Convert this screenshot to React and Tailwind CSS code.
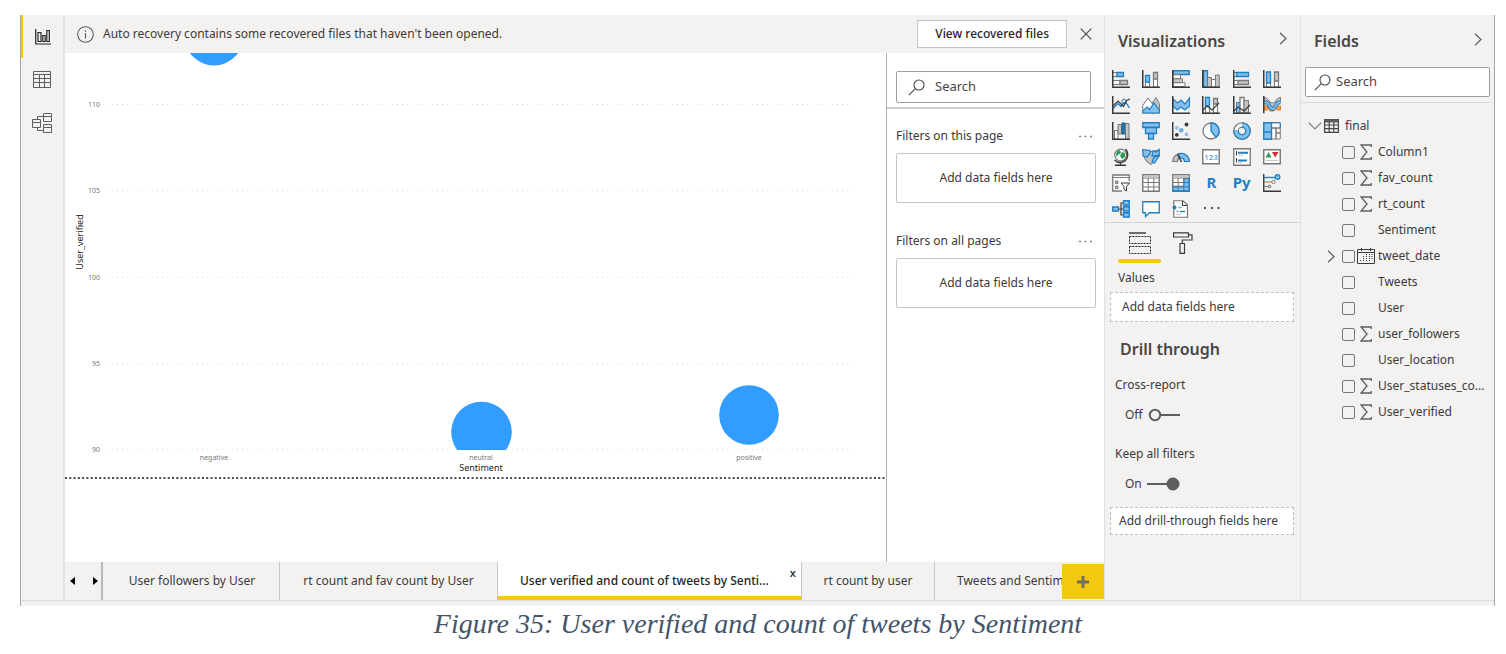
import React from "react";

const DARK = "#3b3a39";
const GREY = "#7a7876";
const LIGHT = "#c8c6c4";
const BLUE = "#1f7fc1";
const SKY = "#84bfee";

function Icon({ size = 18, children, className = "" }) {
  return (
    <svg width={size} height={size} viewBox="0 0 18 18" fill="none" className={className} aria-hidden="true">
      {children}
    </svg>
  );
}

const Axes = () => <path d="M.75 0V17.25H18" stroke={DARK} strokeWidth="1.5" />;

const VISUALS = [
  ["Stacked bar chart", <>
    <path d="M1 2.5H5V6.5H1M1 10.5H8V14.5H1" fill="#fff" stroke={GREY} />
    <path d="M5 2.5H11.5V6.5H5Z" fill={SKY} stroke={BLUE} strokeWidth="1.3" />
    <path d="M8 10.5H15.5V14.5H8Z" fill={LIGHT} stroke={GREY} strokeWidth="1.3" />
    <Axes />
  </>],
  ["Stacked column chart", <>
    <path d="M3.5 12V17H7.5V12M11.5 9V17H15.5V9" fill="#fff" stroke={GREY} />
    <path d="M3.5 5.5H7.5V12H3.5Z" fill={SKY} stroke={BLUE} strokeWidth="1.3" />
    <path d="M11.5 2.5H15.5V9H11.5Z" fill={LIGHT} stroke={GREY} strokeWidth="1.3" />
    <Axes />
  </>],
  ["Clustered bar chart", <>
    <path d="M1 .75H17.25V4.5H1Z" fill={SKY} stroke={BLUE} strokeWidth="1.3" />
    <path d="M1 4.75H8.5V8.5H1Z" fill="#fff" stroke={GREY} />
    <path d="M1 8.75H10.5V12.5H1Z" fill={LIGHT} stroke={GREY} />
    <path d="M1 12.75H13V16.5H1Z" fill="#fff" stroke={GREY} />
    <Axes />
  </>],
  ["Clustered column chart", <>
    <path d="M1.5 .75H5.5V17H1.5Z" fill={SKY} stroke={BLUE} strokeWidth="1.3" />
    <path d="M5.5 7.5H9.5V17H5.5Z" fill={LIGHT} stroke={GREY} />
    <path d="M9.5 9.5H13.5V17H9.5Z" fill="#fff" stroke={GREY} />
    <path d="M13.5 5H17.25V17H13.5Z" fill={LIGHT} stroke={GREY} />
    <Axes />
  </>],
  ["100% stacked bar chart", <>
    <path d="M1 2.5H6V6.5H1M1 10.5H6V14.5H1" fill="#fff" stroke={GREY} />
    <path d="M3.5 2.5H15.5V6.5H3.5Z" fill={SKY} stroke={BLUE} strokeWidth="1.3" />
    <path d="M5 10.5H15.5V14.5H5Z" fill={LIGHT} stroke={GREY} strokeWidth="1.3" />
    <Axes />
  </>],
  ["100% stacked column chart", <>
    <path d="M3.5 13V17H7.5V13M11.5 11V17H15.5V11" fill="#fff" stroke={GREY} />
    <path d="M3.5 2H7.5V13H3.5Z" fill={SKY} stroke={BLUE} strokeWidth="1.3" />
    <path d="M11.5 2H15.5V11H11.5Z" fill={LIGHT} stroke={GREY} strokeWidth="1.3" />
    <Axes />
  </>],
  ["Line chart", <>
    <path d="M1 12.5L6 7.5L9 10.5L11.5 7L14 7L17.5 12" stroke={BLUE} strokeWidth="1.3" />
    <circle cx="12" cy="5.5" r="2.2" stroke={BLUE} />
    <path d="M1 10L6 5L11.5 10.5L14.5 4.5L18 3" stroke={DARK} strokeWidth="1.2" />
    <Axes />
  </>],
  ["Area chart", <>
    <path d="M9 9L14 1.5L17.5 8V17H10Z" fill={LIGHT} stroke={GREY} />
    <path d="M.75 17V9.5L6 2L12 10V17Z" fill="#fff" stroke={GREY} />
    <path d="M.75 17V15L5 11L7.5 13.5L12 7L17.25 14V17Z" fill={SKY} stroke={BLUE} strokeWidth="1.2" />
  </>],
  ["Stacked area chart", <>
    <path d="M1 12L5.5 14L9 11L13 14L17 9V17H1Z" fill="#fff" stroke={LIGHT} />
    <path d="M1 3L5.5 7L9 4L13 8L17.5 2V10L13 14L9 11L5.5 14L1 10Z" fill={SKY} stroke={BLUE} strokeWidth="1.2" />
    <Axes />
  </>],
  ["Line and stacked column chart", <>
    <path d="M3.5 9V17H7.5V9M11.5 9V17H15.5V9" fill="#fff" stroke={GREY} />
    <path d="M3.5 1.5H7.5V10H3.5Z" fill={SKY} stroke={BLUE} strokeWidth="1.3" />
    <path d="M11.5 2.5H15.5V8H11.5Z" fill={LIGHT} stroke={GREY} strokeWidth="1.3" />
    <path d="M1 14L5 10L10 14L17 7" stroke={DARK} strokeWidth="1.2" />
    <Axes />
  </>],
  ["Line and clustered column chart", <>
    <path d="M3.5 6.5H7V17H3.5Z" fill={SKY} stroke={BLUE} />
    <path d="M7 1.5H11V17H7Z" fill="#fff" stroke={GREY} strokeWidth="1.3" />
    <path d="M11 4.5H15.5V17H11Z" fill={LIGHT} stroke={GREY} />
    <path d="M1 15L5 11L11 15L17 9" stroke={DARK} strokeWidth="1.2" />
    <Axes />
  </>],
  ["Ribbon chart", <>
    <path d="M1 10H4L7 15H11L14 10H17.5V14H14L12 11H6L4 14H1Z" fill="#f2a35c" stroke="#e07b1c" />
    <path d="M1 1.5C5 1.5 6 7 9.5 7S13 1.5 17.5 1.5V6C14 6 13 11 9.5 11S5 6 1 6Z" fill={LIGHT} stroke={GREY} />
    <path d="M1 6.5H4C6 7 6.5 13 9.5 13S13 7 15 6.5H17.5" stroke={BLUE} strokeWidth="3.8" />
    <path d="M1 6.5H4C6 7 6.5 13 9.5 13S13 7 15 6.5H17.5" stroke={SKY} strokeWidth="1.8" />
    <path d="M.75 0V17.25" stroke={DARK} strokeWidth="1.5" />
  </>],
  ["Waterfall chart", <>
    <path d="M2.5 8.5H6V17H2.5Z" fill="#fff" stroke={GREY} />
    <path d="M6 2.5H9.5V12H6Z" fill={LIGHT} stroke={GREY} />
    <path d="M10 1H13V12H10Z" fill={BLUE} stroke="#155d91" />
    <path d="M13.5 1.5H17V17H13.5Z" fill={LIGHT} stroke={GREY} />
    <Axes />
  </>],
  ["Funnel", <g fill={SKY} stroke={BLUE} strokeWidth="1.3">
    <path d="M.75 .75H17.25V5.5H.75Z" /><path d="M3.5 5.5H14.5V11.5H3.5Z" /><path d="M6.5 11.5H11.5V17H6.5Z" />
  </g>],
  ["Scatter chart", <>
    <circle cx="14.5" cy="2.5" r="1.9" fill={DARK} /><circle cx="4.8" cy="5.8" r="1.9" fill={SKY} />
    <circle cx="9.3" cy="8.3" r="1.7" fill={SKY} stroke={BLUE} strokeWidth=".8" /><circle cx="4.8" cy="12.8" r="1.9" fill={DARK} />
    <circle cx="14.5" cy="12.3" r="1.9" fill={SKY} />
    <Axes />
  </>],
  ["Pie chart", <>
    <circle cx="9" cy="9" r="8" fill="#fff" stroke={GREY} strokeWidth="1.3" />
    <path d="M9 1A8 8 0 0 1 14 15.3L9 9Z" fill={SKY} stroke={BLUE} strokeWidth="1.3" />
  </>],
  ["Donut chart", <>
    <circle cx="9" cy="9" r="6" stroke={GREY} strokeWidth="5.6" />
    <circle cx="9" cy="9" r="6" stroke="#fff" strokeWidth="3.2" />
    <path d="M9 3A6 6 0 1 1 3 8.5" stroke={BLUE} strokeWidth="5.6" />
    <path d="M9 3A6 6 0 1 1 3 9" stroke={SKY} strokeWidth="3.2" />
  </>],
  ["Treemap", <>
    <path d="M8.5 .75H17.25V6H8.5ZM8.5 6H13V17H8.5ZM13 6H17.25V11H13ZM13 11H17.25V17H13Z" fill="#fff" stroke={GREY} />
    <path d="M.75 .75H8.5V10H.75ZM.75 10H8.5V17.25H.75Z" fill={SKY} stroke={BLUE} strokeWidth="1.4" />
    <path d="M8.5 .75H17.25V6" stroke={BLUE} />
  </>],
  ["Map", <>
    <circle cx="8.6" cy="7" r="5.9" fill="#fff" stroke={GREY} strokeWidth="1.2" />
    <path d="M4.5 3.5L8 2L9 5L6 7L4 9ZM10 4L13 5L13 9L10 11L8 8Z" fill="#2b9b57" />
    <path d="M13.5 1C17 5 16 11 12 13.3C8 15.5 4.5 14 2.5 12M8.5 14.5V17M3 17.2H14" stroke={DARK} strokeWidth="1.4" />
  </>],
  ["Filled map", <>
    <path d="M1 2L7 4L16.5 2L17 9L12 14L9 16.5L5 14L2.5 10Z" fill={LIGHT} stroke={GREY} />
    <path d="M.75 1.5L8 2.5V6L5 9L1 8ZM11 3L14 4L17.3 1.5V7L10 8ZM12 9L17 8L12.5 15L10 14Z" fill={SKY} stroke={BLUE} strokeWidth="1.2" />
  </>],
  ["Gauge", <>
    <path d="M.75 13.5A8.25 8.25 0 0 1 17.25 13.5H12.5A3.5 3.5 0 0 0 5.5 13.5Z" fill={LIGHT} stroke={GREY} strokeWidth="1.2" />
    <path d="M6 6A8.25 8.25 0 0 1 17.25 13.5H12.5A3.5 3.5 0 0 0 9 10Z" fill={SKY} stroke={BLUE} strokeWidth="1.2" />
    <path d="M9.5 14L5.5 6.5" stroke={DARK} strokeWidth="1.5" />
  </>],
  ["Card", <>
    <path d="M.75 1.75H17.25V15.75H.75Z" fill="#fff" stroke={GREY} strokeWidth="1.4" />
    <text x="9" y="12" textAnchor="middle" fontSize="8" fill={BLUE} className="font-['Open_Sans',sans-serif]">123</text>
  </>],
  ["Multi-row card", <>
    <path d="M.75 .75H17.25V17.25H.75Z" fill="#fff" stroke={GREY} strokeWidth="1.3" />
    <path d="M3.5 3V7.5M3.5 10V14.5" stroke={DARK} />
    <path d="M5 4.8H15M5 12.5H14" stroke={BLUE} strokeWidth="1.9" /><path d="M5 7.2H10M5 14.7H9" stroke={LIGHT} />
  </>],
  ["KPI", <>
    <path d="M.75 1.75H17.25V15.75H.75Z" fill="#fff" stroke={GREY} strokeWidth="1.4" />
    <path d="M2.5 9.5L5.5 4L8.5 9.5Z" fill="#2b9b57" /><path d="M9 4H15.5L12.2 9.5Z" fill="#d32f2f" />
    <path d="M3 12.5H15" stroke={LIGHT} />
  </>],
  ["Slicer", <>
    <path d="M17.25 7V1H.75V17H10" fill="#fff" stroke={GREY} strokeWidth="1.3" /><path d="M.75 3.5H17" stroke={GREY} />
    <path d="M3.5 7H6V9.5H3.5ZM3.5 12H6V14.5H3.5Z" fill={LIGHT} stroke={GREY} />
    <path d="M9 9H17.5L14.5 12.5V17L12 15.5V12.5Z" fill="#fff" stroke={DARK} />
  </>],
  ["Table", <>
    <path d="M.75 .75H17.25V17.25H.75Z" fill="#fff" stroke={GREY} strokeWidth="1.4" />
    <path d="M1 4H17M1 8.5H17M1 13H17M6.2 4V17M11.8 4V17" stroke={GREY} /><path d="M1 2.5H17" stroke={LIGHT} strokeWidth="2" />
  </>],
  ["Matrix", <>
    <path d="M.75 .75H17.25V17.25H.75Z" fill="#fff" stroke={GREY} strokeWidth="1.4" />
    <path d="M11.8 4.5H17V17H1V12.5H11.8Z" fill={SKY} stroke={BLUE} strokeWidth="1.3" />
    <path d="M1 4H17M1 8.5H12M1 13H12M6.2 4V13M11.8 4V13" stroke={GREY} />
    <path d="M11.8 8.5H17M11.8 13H17M6.2 13V17M11.8 13V17" stroke={BLUE} /><path d="M1 2.5H17" stroke={LIGHT} strokeWidth="2" />
  </>],
  ["R script visual", "R"],
  ["Python visual", "Py"],
  ["Key influencers", <>
    <path d="M.75 0V17.25H18" stroke={DARK} strokeWidth="1.4" />
    <path d="M1 3.5H13" stroke={BLUE} strokeWidth="1.4" /><circle cx="14.5" cy="3" r="2.4" fill={SKY} stroke={BLUE} strokeWidth="1.2" />
    <path d="M1 8H9M1 12.5H5" stroke={GREY} strokeWidth="1.2" /><circle cx="10.5" cy="8" r="1.7" fill="#fff" stroke={GREY} /><circle cx="6.5" cy="12.5" r="1.4" fill={LIGHT} stroke={GREY} />
  </>],
  ["Decomposition tree", <>
    <path d="M6 9H12M9 9V3H12M9 9V15H12" stroke={DARK} strokeWidth="1.2" />
    <path d="M.75 7H6.5V11H.75ZM11.5 .75H17.25V5H11.5ZM11.5 6.8H17.25V11H11.5ZM11.5 12.8H17.25V17H11.5Z" fill={SKY} stroke={BLUE} strokeWidth="1.4" />
  </>],
  ["Q&A", <path d="M.75 1.75H17.25V12.75H7.5L3.5 16.5V12.75H.75Z" fill="#fff" stroke={BLUE} strokeWidth="1.3" />],
  ["Paginated report", <>
    <path d="M1.75 .75H11L15.5 5V17.25H1.75Z" fill="#fff" stroke={GREY} strokeWidth="1.2" /><path d="M10.5 1V5.5H15" stroke={DARK} />
    <circle cx="2.5" cy="7.5" r="2" fill={BLUE} /><path d="M6 7.5H10M4 11.5H7" stroke={SKY} strokeWidth="1.4" /><path d="M8 11.5H13" stroke={BLUE} strokeWidth="1.4" /><path d="M4 14.5H9" stroke={LIGHT} />
  </>],
  ["More visuals", <path d="M2 8H4M9 8H11M15.5 8H17.5" stroke="#52505a" strokeWidth="1.8" />],
];

function VisualIcon({ art }) {
  if (typeof art === "string") {
    return <span className="block h-[18px] min-w-[18px] text-center text-[15px] leading-4 font-bold text-[#1f7fc1]">{art}</span>;
  }
  return <Icon>{art}</Icon>;
}

const ReportIcon = () => (
  <svg width="16" height="16" viewBox="0 0 16 16" fill="none" stroke="#252423" strokeWidth="1.2" aria-hidden="true">
    <path d="M.7 0V15H16" /><path d="M3 3.5H6V12.5H3ZM7.8 6.5H10.2V12.5H7.8ZM11.8 1.5H14.3V12.5H11.8Z" />
  </svg>
);

const GridIcon = () => (
  <svg width="18" height="17" viewBox="0 0 18 17" fill="none" stroke="#605e5c" aria-hidden="true">
    <path d="M.5 .5H17.5V16.5H.5ZM.5 3.5H17.5M.5 7.5H17.5M.5 11.5H17.5M6.5 3.5V16.5M11.5 3.5V16.5" />
  </svg>
);

const ModelIcon = () => (
  <svg width="20" height="20" viewBox="0 0 20 20" fill="none" stroke="#605e5c" aria-hidden="true">
    <path d="M.5 6.5H8.5V14.5H.5ZM.5 9.5H8.5M11.5 .5H19.5V8.5H11.5ZM11.5 3.5H19.5M11.5 11.5H19.5V19.5H11.5ZM11.5 14.5H19.5M5.5 6V3.5H11.5M5.5 15V17.5H11.5" />
  </svg>
);

const Chevron = () => (
  <svg width="8" height="13" viewBox="0 0 8 13" fill="none" stroke="#605e5c" strokeWidth="1.2" aria-hidden="true">
    <path d="M1 .7L7 6.5L1 12.3" />
  </svg>
);

const SearchIcon = () => (
  <svg width="17" height="17" viewBox="0 0 17 17" fill="none" stroke="#484644" strokeWidth="1.1" aria-hidden="true">
    <circle cx="11" cy="6" r="5" /><path d="M7.3 9.7L.8 16.2" />
  </svg>
);

const Sigma = () => (
  <svg width="12" height="16" viewBox="0 0 12 16" fill="none" stroke="#605e5c" strokeWidth="1.3" aria-hidden="true">
    <path d="M11.3 3V1H1L7 8L1 15H11.3V13" />
  </svg>
);

const CalendarIcon = () => (
  <svg width="18" height="16" viewBox="0 0 18 16" fill="none" stroke="#3b3a39" aria-hidden="true">
    <path d="M.5 1.5H17.5V15.5H.5ZM.5 4.5H17.5M4.5 0V3M13.5 0V3" /><path d="M3.5 12V14M6.5 8V14M9.5 6V14M12.5 6V14M15 6V12" strokeDasharray="1 1" />
  </svg>
);

const TableIcon = () => (
  <svg width="15" height="14" viewBox="0 0 15 14" fill="none" stroke="#484644" strokeWidth="1.2" aria-hidden="true">
    <path d="M.6 .6H14.4V13.4H.6ZM.6 6H14.4M.6 9.7H14.4M5.2 3V13.4M9.8 3V13.4" /><path d="M.6 2H14.4" strokeWidth="3" stroke="#605e5c" />
  </svg>
);

function Chart() {
  const rows = [[110, 52], [105, 138], [100, 225], [95, 311], [90, 397]];
  return (
    <svg viewBox="0 0 821 428" className="block w-full font-['Noto_Sans',sans-serif]" role="img" aria-label="User_verified by Sentiment">
      <defs><clipPath id="plot"><rect x="41" y="0" width="750" height="397" /></clipPath></defs>
      {rows.map(([label, y]) => (
        <g key={label}>
          <path d={`M42 ${y - 0.5}H791`} stroke="#dedede" strokeDasharray="1 4" />
          <text x="35" y={y + 2} textAnchor="end" fontSize="7" fill="#777">{label}</text>
        </g>
      ))}
      <g clipPath="url(#plot)" fill="#329dff">
        <circle cx="149" cy="-17" r="29.5" /><circle cx="416.5" cy="379" r="30.3" /><circle cx="684" cy="362" r="29.8" />
      </g>
      <g textAnchor="middle" fontSize="7" fill="#777">
        <text x="149" y="407">negative</text><text x="416" y="407">neutral</text><text x="684" y="407">positive</text>
      </g>
      <text x="416" y="418" textAnchor="middle" fontSize="9" fill="#252423">Sentiment</text>
      <text transform="translate(18 189) rotate(-90)" textAnchor="middle" fontSize="9" fill="#252423">User_verified</text>
      <path d="M0 425H820" stroke="#4a4a4a" strokeWidth="2" strokeDasharray="2 2.28" />
    </svg>
  );
}

function Search({ id, className, gap }) {
  return (
    <div className={`flex items-center rounded-xs border border-[#a19f9d] bg-white ${className}`}>
      <label htmlFor={id} className="shrink-0"><SearchIcon /></label>
      <input id={id} type="text" aria-label="Search" placeholder="Search" className={`min-w-0 flex-1 bg-transparent text-[13px] text-[#484644] outline-none placeholder:text-[#484644] ${gap}`} />
    </div>
  );
}

function FilterGroup({ title }) {
  return (
    <section>
      <div className="flex h-5 items-center justify-between pr-1">
        <h3>{title}</h3>
        <button type="button" aria-label="More options">
          <svg width="13" height="3" viewBox="0 0 13 3" aria-hidden="true"><path d="M0 1.5H2M5.5 1.5H7.5M11 1.5H13" stroke="#8a8886" strokeWidth="1.3" /></svg>
        </button>
      </div>
      <div className="mt-[7px] flex h-[50px] items-center justify-center rounded-xs border border-[#c8c6c4]">Add data fields here</div>
    </section>
  );
}

const FIELDS = [
  ["Column1", "sum"], ["fav_count", "sum"], ["rt_count", "sum"], ["Sentiment", ""], ["tweet_date", "date"], ["Tweets", ""],
  ["User", ""], ["user_followers", "sum"], ["User_location", ""], ["User_statuses_co...", "sum"], ["User_verified", "sum"],
];

function Switch({ label, name, on }) {
  return (
    <label className="flex h-5 items-center pl-[15px]">
      {label}
      <input type="checkbox" role="switch" aria-label={name} defaultChecked={on} className="sr-only" />
      <svg width="33" height="14" viewBox="0 0 33 14" fill="none" stroke="#605e5c" strokeWidth="2" className="ml-[5px]" aria-hidden="true">
        {on ? <><path d="M0 7H20" /><circle cx="26" cy="7" r="5.5" fill="#605e5c" /></> : <><circle cx="7" cy="7" r="5.2" /><path d="M13 7H32" /></>}
      </svg>
    </label>
  );
}

export default function App() {
  return (
    <div className="flex min-h-screen flex-col bg-white pt-[15px] font-['Noto_Sans',sans-serif] text-xs text-[#3b3a39]">
      <div className="mr-[11px] ml-5 flex flex-1 flex-col border-x border-[#a8a6a4] bg-[#f3f2f1]">
        <div className="flex flex-1 border-b border-[#dddbd9]">
          <nav aria-label="Views" className="flex w-11 shrink-0 flex-col border-r-2 border-[#e6e4e2]">
            <button type="button" aria-label="Report" className="flex h-[43px] items-center justify-center border-l-2 border-[#f2c811]"><ReportIcon /></button>
            <button type="button" aria-label="Data" className="flex h-[43px] items-center justify-center"><GridIcon /></button>
            <button type="button" aria-label="Model" className="flex h-[43px] items-center justify-center"><ModelIcon /></button>
          </nav>

          <main className="flex min-w-0 flex-1 flex-col">
            <div className="flex h-[38px] items-center px-3">
              <svg width="17" height="17" viewBox="0 0 17 17" fill="none" stroke="#605e5c" aria-hidden="true"><circle cx="8.5" cy="8.5" r="7.8" strokeWidth="1.1" /><path d="M8.5 7V12.5M8.5 4.3V5.7" strokeWidth="1.2" /></svg>
              <p className="ml-[9px] flex-1">Auto recovery contains some recovered files that haven't been opened.</p>
              <button type="button" className="h-7 border border-[#c8c6c4] bg-white px-[17px] font-medium text-[#252423]">View recovered files</button>
              <button type="button" aria-label="Close" className="ml-[13px]">
                <svg width="12" height="12" viewBox="0 0 12 12" stroke="#484644" strokeWidth="1.1" aria-hidden="true"><path d="M.7 .7L11.3 11.3M11.3 .7L.7 11.3" /></svg>
              </button>
            </div>
            <div className="flex flex-1 bg-white">
              <div className="min-w-0 flex-1"><Chart /></div>
              <aside aria-label="Filters" className="w-[218px] shrink-0 border-l border-[#b3b0ad]">
                <div className="border-b-2 border-[#cfcdcb] pt-[18px] pr-[13px] pb-1 pl-[9px]">
                  <Search id="filter-search" className="h-8 pl-[11px]" gap="pl-[10px]" />
                </div>
                <div className="flex flex-col gap-7 pt-[17px] pr-2 pl-[9px]">
                  <FilterGroup title="Filters on this page" />
                  <FilterGroup title="Filters on all pages" />
                </div>
              </aside>
            </div>
            <div className="flex h-[38px] min-w-0">
              <div className="flex w-[38px] shrink-0 items-center justify-between border-r-2 border-[#bab8b6] pr-[3px] pl-[5px]">
                <button type="button" aria-label="Previous page"><svg width="5" height="8" viewBox="0 0 5 8" aria-hidden="true"><path d="M5 0V8L0 4Z" /></svg></button>
                <button type="button" aria-label="Next page"><svg width="5" height="8" viewBox="0 0 5 8" aria-hidden="true"><path d="M0 0V8L5 4Z" /></svg></button>
              </div>
              <div className="flex min-w-0 flex-1 overflow-hidden whitespace-nowrap">
                <button type="button" className="w-[177px] shrink-0 border-r border-[#c8c6c4] pl-[2px] text-center">User followers by User</button>
                <button type="button" className="w-[218px] shrink-0 border-r border-[#c8c6c4] text-center">rt count and fav count by User</button>
                <div className="relative flex w-[304px] shrink-0 border-r border-b-4 border-r-[#c8c6c4] border-b-[#f2c811] bg-white">
                  <button type="button" className="flex-1 pt-1 pl-[22px] text-left font-medium text-[#252423]">User verified and count of tweets by Senti...</button>
                  <button type="button" aria-label="Delete page" className="absolute top-1 right-[5px] text-[11px] leading-[14px] font-semibold">x</button>
                </div>
                <button type="button" className="w-[133px] shrink-0 border-r border-[#c8c6c4] text-center">rt count by user</button>
                <button type="button" className="shrink-0 pl-[22px] text-left">Tweets and Sentim</button>
              </div>
              <button type="button" aria-label="New page" className="mt-[2px] mb-px flex w-[42px] shrink-0 items-center justify-center bg-[#f2c811]">
                <svg width="12" height="12" viewBox="0 0 12 12" stroke="#74705f" strokeWidth="3" aria-hidden="true"><path d="M6 0V12M0 6H12" /></svg>
              </button>
            </div>
          </main>

          <aside aria-label="Visualizations" className="w-[197px] shrink-0 border-x border-[#e1dfdd]">
            <div className="flex h-[55px] items-center justify-between px-[13px]">
              <h2 className="pb-1 text-base font-semibold text-[#484644]">Visualizations</h2>
              <button type="button" aria-label="Collapse Visualizations" className="pb-2"><Chevron /></button>
            </div>
            <div className="grid grid-cols-6 gap-y-2 border-b border-[#d6d4d2] pr-[7px] pb-1 pl-[7px]">
              {VISUALS.map(([name, art]) => (
                <button key={name} type="button" aria-label={name} title={name} className="flex h-[18px] justify-start"><VisualIcon art={art} /></button>
              ))}
            </div>
            <div className="flex pl-[13px]">
              <button type="button" aria-label="Fields" className="flex h-9 w-[43px] items-center justify-center pt-1">
                <svg width="22" height="22" viewBox="0 0 22 22" fill="none" stroke="#252423" aria-hidden="true"><path d="M0 1H17" strokeWidth="1.3" /><path d="M.5 4.5H21.5V11.5H.5ZM.5 14.5H21.5V21.5H.5Z" strokeDasharray="2 1" /></svg>
              </button>
              <button type="button" aria-label="Format" className="flex h-9 w-[43px] items-center justify-center pt-1">
                <svg width="20" height="22" viewBox="0 0 20 22" fill="none" stroke="#3b3a39" strokeWidth="1.2" aria-hidden="true"><path d="M.6 .8H15.5V5H.6ZM15.5 2.8H19V8H9.3V11.5M7 11.5H11.5V21.3H7Z" /></svg>
              </button>
            </div>
            <div className="ml-[13px] h-1 w-[43px] rounded-full bg-[#f2c811]" />
            <div className="pr-[6px] pl-[5px]">
              <p className="mt-[5px] pl-2 leading-5">Values</p>
              <div className="mt-1 flex h-[30px] items-center border border-dashed border-[#c0bebc] bg-white pl-[11px]">Add data fields here</div>
              <h2 className="mt-[15px] pl-[10px] text-base leading-6 font-semibold text-[#484644]">Drill through</h2>
              <p className="mt-[14px] pl-[5px] leading-5">Cross-report</p>
              <div className="mt-[10px]"><Switch label="Off" name="Cross-report" on={false} /></div>
              <p className="mt-[19px] pl-[5px] leading-5">Keep all filters</p>
              <div className="mt-[10px]"><Switch label="On" name="Keep all filters" on /></div>
              <div className="mt-[13px] flex h-7 items-center border border-dashed border-[#c0bebc] bg-white pl-2 whitespace-nowrap">Add drill-through fields here</div>
            </div>
          </aside>

          <aside aria-label="Fields" className="w-[193px] shrink-0">
            <div className="flex h-[52px] items-center justify-between pr-3 pl-[13px]">
              <h2 className="text-base font-semibold text-[#484644]">Fields</h2>
              <button type="button" aria-label="Collapse Fields" className="pb-1"><Chevron /></button>
            </div>
            <div className="border-b border-[#dddbd9] pr-1 pb-[5px] pl-1">
              <Search id="field-search" className="h-[30px] pl-2" gap="pl-[5px]" />
            </div>
            <div className="pt-[10px]">
              <button type="button" className="flex h-[26px] items-center pl-[7px]">
                <svg width="14" height="8" viewBox="0 0 14 8" fill="none" stroke="#797775" strokeWidth="1.1" aria-hidden="true"><path d="M.7 .7L7 7L13.3 .7" /></svg>
                <span className="ml-[2px]"><TableIcon /></span>
                <span className="ml-[6px]">final</span>
              </button>
              <ul>
                {FIELDS.map(([name, kind]) => (
                  <li key={name} className="flex h-[26px] items-center pl-[26px]">
                    <span className="flex w-[15px] shrink-0">{kind === "date" && <Chevron />}</span>
                    <label className="flex items-center">
                      <input type="checkbox" className="size-[13px] shrink-0 appearance-none rounded-xs border border-[#797775]" />
                      <span className="flex w-[23px] shrink-0 justify-start">
                        {kind === "sum" && <span className="ml-[5px]"><Sigma /></span>}
                        {kind === "date" && <span className="ml-[2px]"><CalendarIcon /></span>}
                      </span>
                      <span className="whitespace-nowrap">{name}</span>
                    </label>
                  </li>
                ))}
              </ul>
            </div>
          </aside>
        </div>
        <div className="h-[5px]" />
      </div>
      <p className="h-12 pl-[10px] text-center font-['Liberation_Serif',serif] text-[28px] leading-9 text-[#44546a] italic">Figure 35: User verified and count of tweets by Sentiment</p>
    </div>
  );
}
